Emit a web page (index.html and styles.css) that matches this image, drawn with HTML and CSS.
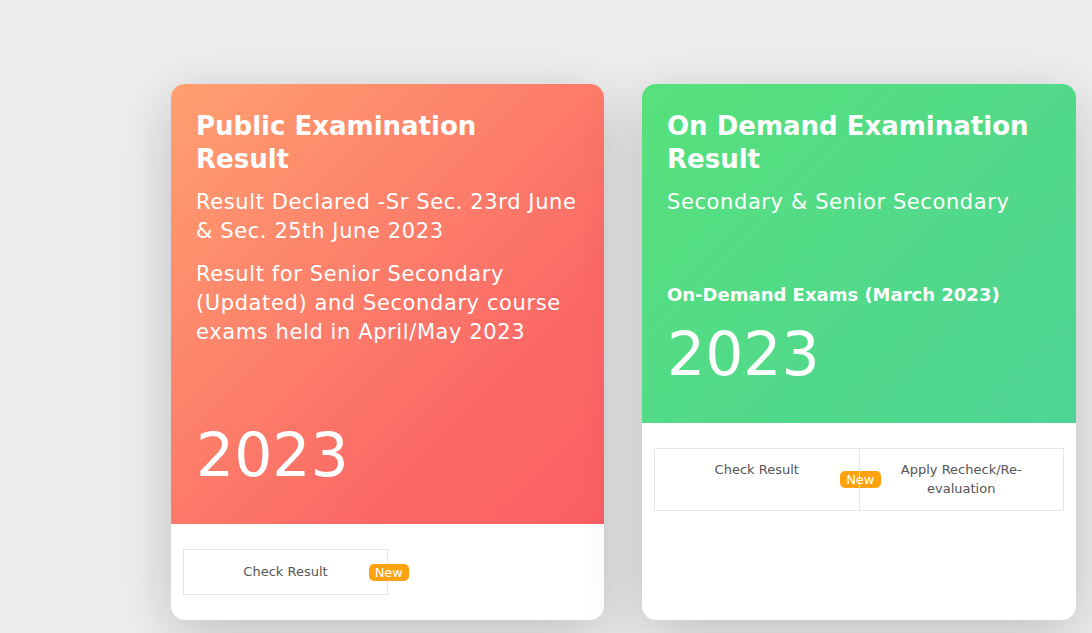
FILE: index.html
```html
<!DOCTYPE html>
<html lang="en">
  <head>
    <meta charset="UTF-8" />
    <title>Results</title>
    <link rel="stylesheet" href="styles.css">
  </head>
  <body>
    <div class="results">
      <!-- Public examination -->
      <div class="card">
        <div class="card-head orange">
          <h2 class="card-title">Public Examination Result</h2>
          <p class="card-text">Result Declared -Sr Sec. 23rd June &amp; Sec. 25th June 2023</p>
          <p class="card-text">Result for Senior Secondary (Updated) and Secondary course exams held in April/May 2023</p>
          <div class="year year-low">2023</div>
        </div>
        <div class="card-foot">
          <div class="links links-single">
            <a class="link" href="#">Check Result<span class="badge">New</span></a>
          </div>
        </div>
      </div>

      <!-- On demand examination -->
      <div class="card card-wide">
        <div class="card-head green">
          <h2 class="card-title">On Demand Examination Result</h2>
          <p class="card-text">Secondary &amp; Senior Secondary</p>
          <h3 class="card-sub">On-Demand Exams (March 2023)</h3>
          <div class="year">2023</div>
        </div>
        <div class="card-foot">
          <div class="links">
            <a class="link" href="#">Check Result<span class="badge badge-mid">New</span></a>
            <a class="link" href="#">Apply Recheck/Re-evaluation</a>
          </div>
        </div>
      </div>
    </div>
  </body>
</html>
```

FILE: styles.css
```css
body {
  margin: 0;
  background: #eeeeee;
  font-family: "DejaVu Sans", "Open Sans", sans-serif;
  overflow: hidden;
}

.results {
  display: flex;
  gap: 38px;
  padding: 84px 0 13px 171px;
  align-items: stretch;
}

.card {
  width: 433px;
  flex-shrink: 0;
  height: 536px;
  background: #fff;
  border-radius: 14px;
  overflow: hidden;
  display: flex;
  flex-direction: column;
  box-shadow: 0 15px 60px rgba(0, 0, 0, 0.2);
}

.card-wide {
  width: 434px;
}

.card-head {
  color: #fff;
  padding: 26px 25px 0 25px;
  display: flex;
  flex-direction: column;
}

.orange {
  height: 414px;
  background: linear-gradient(135deg, #ffa070 0%, #fb6a66 70%, #fa5f64 100%);
}

.green {
  height: 313px;
  background: linear-gradient(135deg, #56e17b 0%, #4ed495 100%);
}

.card-title {
  margin: 0;
  font-size: 26px;
  line-height: 33px;
  font-weight: bold;
  max-width: 370px;
}

.card-text {
  margin: 12px 0 0;
  font-size: 21px;
  line-height: 29px;
  letter-spacing: 0.6px;
  font-weight: normal;
}

.card-text + .card-text {
  margin-top: 14px;
}

.card-sub {
  margin: 66px 0 0;
  font-size: 18px;
  line-height: 24px;
  font-weight: bold;
}

.year {
  font-size: 60px;
  line-height: 70px;
  font-weight: normal;
  margin-top: 12px;
}

.year-low {
  margin-top: auto;
  margin-bottom: 34px;
}

.card-foot {
  padding: 25px 12px 0;
}

.links {
  display: flex;
  border: 1px solid #e6e6e6;
  min-height: 61px;
}

.links-single {
  width: 203px;
  min-height: 44px;
  align-items: center;
}

.link {
  position: relative;
  flex: 1;
  text-align: center;
  color: #555;
  text-decoration: none;
  font-size: 13px;
  line-height: 19px;
  padding: 11px 20px;
}

.links-single .link {
  padding: 11px 20px 12px;
}

.link + .link {
  border-left: 1px solid #e6e6e6;
}

.badge {
  position: absolute;
  right: -22px;
  top: 13px;
  background: #ffa20f;
  color: #fff;
  font-size: 13px;
  line-height: 17px;
  padding: 0 6px;
  border-radius: 5px;
}

.badge-mid {
  top: 22px;
}
```
